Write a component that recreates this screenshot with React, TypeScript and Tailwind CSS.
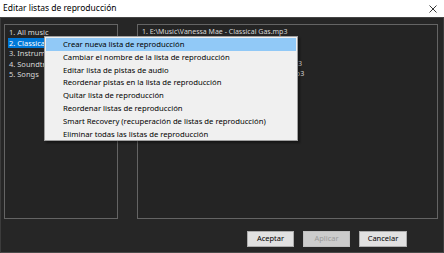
import React from "react";

const menuItems = [
  "Crear nueva lista de reproducción",
  "Cambiar el nombre de la lista de reproducción",
  "Editar lista de pistas de audio",
  "Reordenar pistas en la lista de reproducción",
  "Quitar lista de reproducción",
  "Reordenar listas de reproducción",
  "Smart Recovery (recuperación de listas de reproducción)",
  "Eliminar todas las listas de reproducción",
];

const leftItems = ["1. All music", "2. Classical", "3. Instrumental", "4. Soundtracks", "5. Songs"];
const rightItems = [
  "1. E:\\Music\\Vanessa Mae - Classical Gas.mp3",
  "2. E:\\Music\\Bach - Air on the G String.mp3",
  "3. E:\\Music\\Vivaldi - Four Seasons.mp3",
  "4. E:\\Music\\Beethoven - Moonlight Sonata 1.mp3",
  "5. E:\\Music\\Tchaikovsky - Swan Lake Suite 20.mp3",
];

export default function App() {
  const font = { fontFamily: '"Noto Sans", "Open Sans", sans-serif' };
  return (
    <div className="relative w-[444px] h-[253px] overflow-hidden flex flex-col bg-white" style={font}>
      <div className="h-[17px] bg-white flex items-center justify-between pl-[3px] pr-[7px]">
        <span className="text-[8.5px] text-black leading-none">Editar listas de reproducción</span>
        <svg width="8" height="8" viewBox="0 0 8 8">
          <path d="M0.5 0.5 L7.5 7.5 M7.5 0.5 L0.5 7.5" stroke="#222" strokeWidth="0.9" />
        </svg>
      </div>
      <div className="flex-1 bg-[#262626] border-t border-t-[#454545] border-x border-x-[#3c3c3c] border-b border-b-[#4a4a4a] flex flex-col pt-[6px] pl-[3px] pr-[4px]">
        <div className="flex gap-[19px] h-[195px]">
          <div className="w-[114px] h-full border border-[#646464] bg-[#242424] pt-[2px] px-[3px]">
            {leftItems.map((t, i) => (
              <div
                key={t}
                className={`h-[10.5px] leading-[10.5px] text-[7.5px] px-[1px] whitespace-nowrap ${i === 1 ? "bg-[#0078d7] text-white" : "text-[#d8d8d8]"}`}
              >
                {t}
              </div>
            ))}
          </div>
          <div className="w-[301px] h-full border border-[#646464] bg-[#242424] pt-[2px] px-[3px]">
            {rightItems.map((t) => (
              <div key={t} className="h-[10.5px] leading-[10.5px] text-[7px] px-[1px] whitespace-nowrap text-[#d8d8d8]">
                {t}
              </div>
            ))}
          </div>
        </div>
        <div className="flex justify-end gap-[9px] mt-[12px] pr-[32px]">
          <button className="w-[47px] h-[16px] bg-[#e1e1e1] border border-[#adadad] text-[7.5px] text-black leading-none">Aceptar</button>
          <button className="w-[47px] h-[16px] bg-[#cccccc] border border-[#bfbfbf] text-[7.5px] text-[#9a9a9a] leading-none">Aplicar</button>
          <button className="w-[48px] h-[16px] bg-[#e1e1e1] border border-[#adadad] text-[7.5px] text-black leading-none">Cancelar</button>
        </div>
      </div>
      <div className="absolute left-[44px] top-[36px] w-[254px] h-[105px] bg-[#f0f0f0] border border-[#a0a0a0] shadow-[2px_2px_2px_rgba(0,0,0,0.4)] p-[1px]">
        {menuItems.map((t, i) => (
          <div
            key={t}
            className={`h-[12.8px] leading-[12.8px] pl-[17px] text-[7.7px] text-black whitespace-nowrap ${i === 0 ? "bg-[#91c9f7]" : ""}`}
          >
            {t}
          </div>
        ))}
      </div>
    </div>
  );
}
